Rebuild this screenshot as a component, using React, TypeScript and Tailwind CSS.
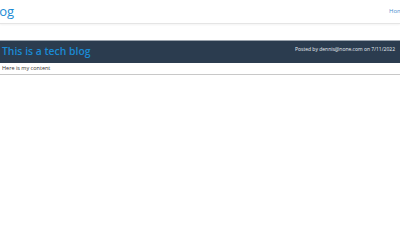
import React from 'react';

export const App: React.FC = () => {
  return (
    <div className="min-h-screen bg-white font-['Open_Sans',sans-serif] overflow-hidden">
      <header className="h-[24px] border-b border-[#e5e5e5] shadow-[0_1px_2px_rgba(0,0,0,0.05)] flex justify-between items-start">
        <a className="-ml-[12px] mt-[1px] text-[13px] leading-[20px] text-[#1a8ad4]">blog</a>
        <a className="mt-[6px] -mr-[6px] text-[6px] leading-[10px] text-[#4a90d0]">Home</a>
      </header>

      <main className="mt-[16px]">
        <div className="bg-[#2b3c4f] border-t border-[#9aa3ad] h-[23px] flex justify-between items-start">
          <h1 className="ml-[2px] mt-[2px] text-[10.4px] leading-[16px] font-semibold text-[#1a8ad4]">This is a tech blog</h1>
          <p className="mr-[5px] mt-[4px] text-[5px] leading-[8px] text-[#e8edf2]">Posted by dennis@none.com on 7/11/2022</p>
        </div>
        <div className="border-b border-[#c8c8c8] pl-[2px] pt-[2px] pb-[2px]">
          <p className="text-[5.5px] leading-[7px] text-[#333]">Here is my content</p>
        </div>
      </main>
    </div>
  );
};

export default App;
